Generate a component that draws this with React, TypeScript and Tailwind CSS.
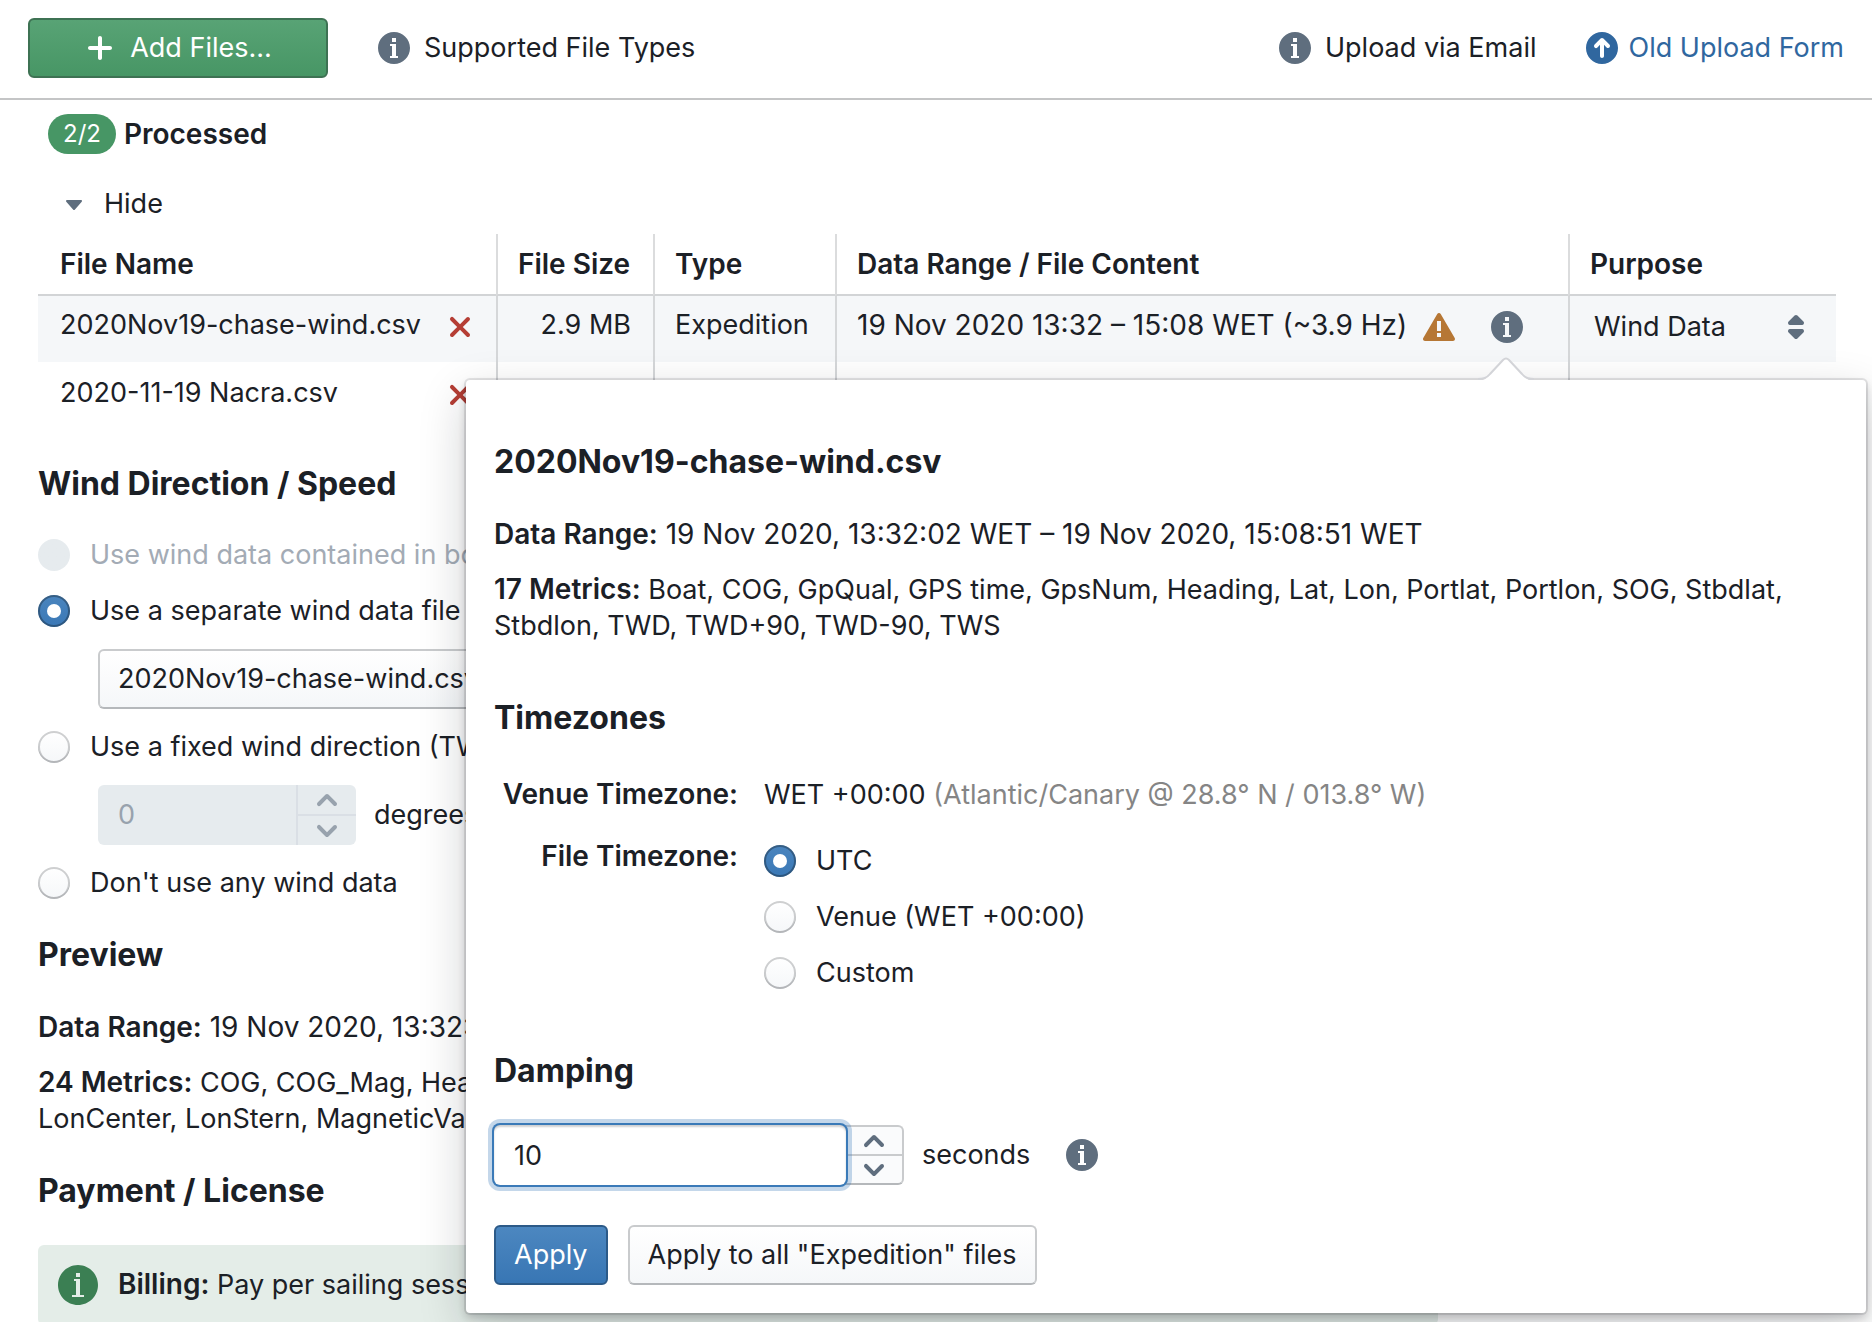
import React, { useState } from 'react';

const icons = {
  info: 'M8 0C3.58 0 0 3.58 0 8s3.58 8 8 8 8-3.58 8-8-3.58-8-8-8zM7 3h2v2H7V3zm3 10H6v-1h1V7H6V6h3v6h1v1z',
  plus: 'M13 7H9V3c0-.55-.45-1-1-1s-1 .45-1 1v4H3c-.55 0-1 .45-1 1s.45 1 1 1h4v4c0 .55.45 1 1 1s1-.45 1-1V9h4c.55 0 1-.45 1-1s-.45-1-1-1z',
  arrowUp:
    'M8 0C3.58 0 0 3.58 0 8s3.58 8 8 8 8-3.58 8-8-3.58-8-8-8zm3 8c-.28 0-.53-.11-.71-.29L9 6.41V12c0 .55-.45 1-1 1s-1-.45-1-1V6.41l-1.29 1.3a1.003 1.003 0 01-1.42-1.42l3-3C7.47 3.11 7.72 3 8 3s.53.11.71.29l3 3A1.003 1.003 0 0111 8z',
  caretDown:
    'M12 6.5c0-.28-.22-.5-.5-.5h-7a.495.495 0 00-.37.83l3.5 4c.09.1.22.17.37.17s.28-.07.37-.17l3.5-4c.08-.09.13-.2.13-.33z',
  cross:
    'M9.41 8l3.29-3.29c.19-.18.3-.43.3-.71a1.003 1.003 0 00-1.71-.71L8 6.59l-3.29-3.3a1.003 1.003 0 00-1.42 1.42L6.59 8 3.3 11.29c-.19.18-.3.43-.3.71a1.003 1.003 0 001.71.71L8 9.41l3.29 3.29c.18.19.43.3.71.3a1.003 1.003 0 00.71-1.71L9.41 8z',
  warning:
    'M15.84 13.5l.01-.01-7-12-.01.01c-.17-.3-.48-.5-.85-.5s-.67.2-.85.5l-.01-.01-7 12 .01.01c-.09.15-.15.31-.15.5 0 .55.45 1 1 1h14c.55 0 1-.45 1-1 0-.19-.06-.35-.15-.5zm-6.85-.51h-2v-2h2v2zm0-3h-2v-5h2v5z',
  chevronUp:
    'M12.71 9.29l-4-4C8.53 5.11 8.28 5 8 5s-.53.11-.71.29l-4 4a1.003 1.003 0 001.42 1.42L8 7.41l3.29 3.29c.18.19.43.3.71.3a1.003 1.003 0 00.71-1.71z',
  chevronDown:
    'M12 5c-.28 0-.53.11-.71.29L8 8.59l-3.29-3.3a1.003 1.003 0 00-1.42 1.42l4 4c.18.18.43.29.71.29s.53-.11.71-.29l4-4A1.003 1.003 0 0012 5z',
  doubleCaret:
    'M5 7h6a1.003 1.003 0 00.71-1.71l-3-3C8.53 2.11 8.28 2 8 2s-.53.11-.71.29l-3 3A1.003 1.003 0 005 7zm6 2H5a1.003 1.003 0 00-.71 1.71l3 3c.18.18.43.29.71.29s.53-.11.71-.29l3-3A1.003 1.003 0 0011 9z',
};

function Icon({ name, className = 'text-[#5f6e7e]' }: { name: keyof typeof icons; className?: string }) {
  return (
    <svg viewBox="0 0 16 16" fill="currentColor" aria-hidden="true" className={`size-8 shrink-0 ${className}`}>
      <path fillRule="evenodd" d={icons[name]} />
    </svg>
  );
}

function Heading({ children, className = 'my-9' }: { children: React.ReactNode; className?: string }) {
  return <h2 className={`text-[32px] leading-9 font-bold ${className}`}>{children}</h2>;
}

function Strong({ children }: { children: React.ReactNode }) {
  return <b className="text-[28px] leading-none font-semibold">{children}</b>;
}

function Radio({ label, ...props }: { label: string } & React.InputHTMLAttributes<HTMLInputElement>) {
  return (
    <label className={`mb-5 flex h-9 items-center gap-5 whitespace-nowrap ${props.disabled ? 'text-[#a3abb5]' : ''}`}>
      <input
        type="radio"
        className="grid size-8 shrink-0 appearance-none place-items-center rounded-full bg-linear-to-b from-white to-[#f5f7f9] shadow-[inset_0_0_0_2px_rgba(16,22,26,0.2),inset_0_-2px_0_rgba(16,22,26,0.1)] before:hidden before:size-3.5 before:rounded-full before:bg-white checked:from-[#4a85be] checked:to-[#3a78b6] checked:shadow-[inset_0_0_0_2px_rgba(16,22,26,0.35)] checked:before:block disabled:from-[#e6ebee] disabled:to-[#e6ebee] disabled:shadow-none"
        {...props}
      />
      {label}
    </label>
  );
}

const buttonClass =
  'flex h-[60px] items-center justify-center rounded-md border-2 px-[18px] whitespace-nowrap bg-linear-to-b';

const columns = ['File Name', 'File Size', 'Type', 'Data Range / File Content', 'Purpose'];

const files = [
  {
    name: '2020Nov19-chase-wind.csv',
    size: '2.9 MB',
    type: 'Expedition',
    range: '19 Nov 2020 13:32 – 15:08 WET (~3.9 Hz)',
    purpose: 'Wind Data',
  },
  { name: '2020-11-19 Nacra.csv' },
];

function Toolbar() {
  return (
    <header className="flex items-center justify-between border-b-2 border-[#c4c5c6] px-7 pt-[18px] pb-5">
      <div className="flex items-center gap-[50px]">
        <button className={`${buttonClass} w-[300px] gap-3.5 border-[#3e7253] from-[#58a375] to-[#479665] text-white`}>
          <Icon name="plus" className="text-white" />
          Add Files...
        </button>
        <button className="flex items-center gap-3.5">
          <Icon name="info" />
          Supported File Types
        </button>
      </div>
      <div className="flex items-center gap-[50px]">
        <button className="flex items-center gap-3.5">
          <Icon name="info" />
          Upload via Email
        </button>
        <a href="#" className="flex items-center gap-2.5 text-[#30679f]">
          <Icon name="arrowUp" className="text-[#30679f]" />
          Old Upload Form
        </a>
      </div>
    </header>
  );
}

function FileTable() {
  return (
    <table className="w-full table-fixed border-separate border-spacing-0 text-left">
      <colgroup>
        <col className="w-[458px]" />
        <col className="w-[157px]" />
        <col className="w-[182px]" />
        <col />
        <col className="w-[268px]" />
      </colgroup>
      <thead>
        <tr>
          {columns.map((c, i) => (
            <th
              key={c}
              className={`h-[62px] border-b-2 border-b-[#d2d4d6] text-[28px] font-semibold whitespace-nowrap ${
                i ? 'border-l-2 border-l-[#dbdcdd] pl-5' : 'pl-[22px]'
              }`}
            >
              {c}
            </th>
          ))}
        </tr>
      </thead>
      <tbody className="[&_td]:border-[#d5d7d9] [&_td]:align-top [&_td+td]:border-l-2">
        {files.map((f, i) => (
          <tr key={f.name} className={i === 0 ? 'h-[66px] bg-[#f5f7f9] [&>td]:pt-[11px]' : 'h-[68px] [&>td]:pt-[13px]'}>
            <td className="pr-5 pl-[22px]">
              <div className="flex items-end justify-between">
                {f.name}
                <button aria-label={`Remove ${f.name}`}>
                  <Icon name="cross" className="text-[#b53e35]" />
                </button>
              </div>
            </td>
            <td className="pr-[22px] text-right">{f.size}</td>
            <td className="pl-5">{f.type}</td>
            <td className="pl-5">
              {f.range && (
                <div className="flex items-end text-[28px] whitespace-nowrap">
                  {f.range}
                  <Icon name="warning" className="ml-4 text-[#b67735]" />
                  <button aria-label="File details" className="ml-9">
                    <Icon name="info" />
                  </button>
                </div>
              )}
            </td>
            <td className="pr-6 pl-6">
              {f.purpose && (
                <div className="relative flex h-10 items-center">
                  <select aria-label="Purpose" className="w-full appearance-none">
                    <option>{f.purpose}</option>
                  </select>
                  <span className="pointer-events-none absolute right-0 flex">
                    <Icon name="doubleCaret" />
                  </span>
                </div>
              )}
            </td>
          </tr>
        ))}
      </tbody>
    </table>
  );
}

function WindSource() {
  return (
    <div role="radiogroup" aria-label="Wind source">
      <Radio name="wind" label="Use wind data contained in boat files" disabled />
      <Radio name="wind" label="Use a separate wind data file" defaultChecked />
      <select
        aria-label="Wind data file"
        className="mb-5 ml-[60px] block h-[60px] w-[480px] appearance-none rounded-md border-2 border-[#c9cbcd] border-b-[#b5b8bb] bg-linear-to-b from-white to-[#f5f7f9] px-[18px]"
      >
        <option>2020Nov19-chase-wind.csv</option>
      </select>
      <Radio name="wind" label="Use a fixed wind direction (TWD)" />
      <div className="mb-5 ml-[60px] flex items-center">
        <div className="flex h-[60px] w-[258px] overflow-hidden rounded-md bg-[#e6ebee] text-[#98a2ad]">
          <input aria-label="Wind direction" disabled defaultValue="0" className="min-w-0 flex-1 px-5" />
          <div className="flex w-[60px] flex-col border-l-2 border-[#dadfe5]">
            <button disabled aria-label="Increase direction" className="flex min-h-0 flex-1 items-center justify-center">
              <Icon name="chevronUp" className="text-[#98a2ad]" />
            </button>
            <div className="h-0.5 bg-[#dadfe5]" />
            <button disabled aria-label="Decrease direction" className="flex min-h-0 flex-1 items-center justify-center">
              <Icon name="chevronDown" className="text-[#98a2ad]" />
            </button>
          </div>
        </div>
        <span className="ml-[18px]">degrees</span>
      </div>
      <Radio name="wind" label="Don't use any wind data" />
    </div>
  );
}

function FilePopover() {
  const [damping, setDamping] = useState('10');
  const step = (by: number) => setDamping(String(Number(damping) + by));

  return (
    <div
      role="dialog"
      aria-label="File details"
      className="absolute top-[380px] right-1.5 left-[466px] rounded bg-white p-7 shadow-[0_0_0_2px_rgba(16,22,26,0.1),0_4px_8px_rgba(16,22,26,0.2),0_16px_48px_rgba(16,22,26,0.2)]"
    >
      <svg viewBox="0 0 60 24" aria-hidden="true" className="absolute -top-[23px] right-[330px] h-6 w-[60px]">
        <path d="M3 24 Q10 23 14 18 L27 3 Q30 0 33 3 L46 18 Q50 23 57 24Z" fill="#fff" />
        <path d="M2 22 Q10 22 14 17 L27 3 Q30 0 33 3 L46 17 Q50 22 58 22" fill="none" stroke="#d3d4d8" strokeWidth="2" />
      </svg>

      <Heading>2020Nov19-chase-wind.csv</Heading>
      <p className="text-[28px] leading-9">
        <Strong>Data Range:</Strong> 19 Nov 2020, 13:32:02 WET – 19 Nov 2020, 15:08:51 WET
      </p>
      <p className="mt-5">
        <Strong>17 Metrics:</Strong> Boat, COG, GpQual, GPS time, GpsNum, Heading, Lat, Lon, Portlat, Portlon, SOG,
        Stbdlat, Stbdlon, TWD, TWD+90, TWD-90, TWS
      </p>

      <Heading className="mt-14 mb-[41px]">Timezones</Heading>
      <div className="grid grid-cols-[244px_1fr] gap-x-[26px] gap-y-[26px]">
        <div className="text-right">
          <Strong>Venue Timezone:</Strong>
        </div>
        <div>
          WET +00:00 <span className="text-[#858585]">(Atlantic/Canary @ 28.8° N / 013.8° W)</span>
        </div>
        <div id="file-tz" className="text-right">
          <Strong>File Timezone:</Strong>
        </div>
        <div role="radiogroup" aria-labelledby="file-tz" className="pt-1">
          <Radio name="tz" label="UTC" defaultChecked />
          <Radio name="tz" label="Venue (WET +00:00)" />
          <Radio name="tz" label="Custom" />
        </div>
      </div>

      <Heading className="mt-[42px] mb-9">Damping</Heading>
      <div className="flex items-center">
        <input
          id="damping"
          value={damping}
          onChange={(e) => setDamping(e.target.value)}
          className="relative h-[60px] w-[352px] rounded-md px-5 shadow-[0_0_0_2px_#3a7ab8,0_0_0_6px_rgba(58,122,184,0.3),inset_0_2px_2px_rgba(16,22,26,0.2)] outline-none"
        />
        <div className="flex h-[60px] w-[58px] flex-col overflow-hidden rounded-r-md border-2 border-l-0 border-[#c9cbcd] border-b-[#b5b8bb] bg-[#fafbfc]">
          <button aria-label="Increase damping" onClick={() => step(1)} className="flex min-h-0 flex-1 items-center justify-center">
            <Icon name="chevronUp" />
          </button>
          <div className="h-0.5 bg-[#c9cbcd]" />
          <button aria-label="Decrease damping" onClick={() => step(-1)} className="flex min-h-0 flex-1 items-center justify-center">
            <Icon name="chevronDown" />
          </button>
        </div>
        <label htmlFor="damping" className="mr-9 ml-[18px]">
          seconds
        </label>
        <Icon name="info" />
      </div>

      <div className="mt-10 flex gap-5">
        <button className={`${buttonClass} border-[#2c5a88] from-[#4c87c0] to-[#3876b4] text-white`}>Apply</button>
        <button className={`${buttonClass} border-[#c9cbcd] border-b-[#b5b8bb] from-white to-[#f5f7f9]`}>
          Apply to all "Expedition" files
        </button>
      </div>
    </div>
  );
}

export default function App() {
  return (
    <div className="relative h-screen overflow-hidden bg-white font-['Inter',sans-serif] text-[27px] leading-9 text-[#1b2026]">
      <Toolbar />
      <main className="pt-3.5 pr-9 pl-[38px]">
        <div className="flex items-center gap-2 pl-2.5">
          <span className="flex h-10 items-center rounded-full bg-[#479665] px-[15px] text-2xl text-white">2/2</span>
          <Strong>Processed</Strong>
        </div>
        <button className="mt-5 flex h-[60px] items-center gap-3.5 px-5">
          <Icon name="caretDown" />
          Hide
        </button>

        <FileTable />

        <Heading className="mt-9 mb-[35px]">Wind Direction / Speed</Heading>
        <WindSource />

        <Heading>Preview</Heading>
        <p className="text-[28px] leading-9">
          <Strong>Data Range:</Strong> 19 Nov 2020, 13:32:02 WET
        </p>
        <p className="mt-5">
          <Strong>24 Metrics:</Strong> COG, COG_Mag, Heading
          <br />
          LonCenter, LonStern, MagneticVar
        </p>

        <Heading>Payment / License</Heading>
        <div className="flex max-w-[1400px] gap-5 rounded-md bg-[#e4ede8] p-5">
          <svg viewBox="0 0 20 20" aria-hidden="true" className="size-10 shrink-0 text-[#3b7f53]">
            <path
              fill="currentColor"
              fillRule="evenodd"
              d="M10 0C4.48 0 0 4.48 0 10s4.48 10 10 10 10-4.48 10-10S15.52 0 10 0zM9 4h2v2H9V4zm4 12H7v-1h2V8H8V7h3v8h2v1z"
            />
          </svg>
          <p className="pt-0.5">
            <Strong>Billing:</Strong> Pay per sailing session
          </p>
        </div>
      </main>
      <FilePopover />
    </div>
  );
}
